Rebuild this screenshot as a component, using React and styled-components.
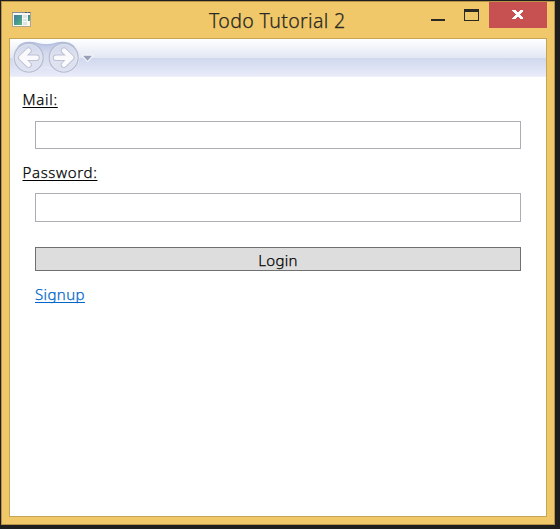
import React from "react";
import styled, { createGlobalStyle } from "styled-components";

const GlobalStyle = createGlobalStyle`
  * { box-sizing: border-box; }
  body { margin: 0; background: #1e1e1e; overflow: hidden; }
`;

const Desktop = styled.div`
  width: 560px;
  height: 529px;
  padding: 1px 5px 4px 1px;
  background: #1e1e1e;
  font-family: "Noto Sans", "Open Sans", sans-serif;
  font-weight: 300;
  -webkit-text-stroke-width: 0.25px;
`;

const Window = styled.div`
  display: flex;
  flex-direction: column;
  height: 524px;
  padding: 0 7px 7px;
  border: 1px solid #b6914a;
  background: #f0c869;
`;

const TitleBar = styled.header`
  display: grid;
  grid-template-columns: 200px 1fr auto;
  height: 36px;
  flex: none;
`;

const AppIcon = styled.svg`
  display: block;
  margin: 9px 0 0 2px;
`;

const Title = styled.h1`
  margin: 0;
  font-size: 19.5px;
  line-height: 37px;
  font-weight: 300;
  letter-spacing: ${(p) => p.$tracking}px;
  white-space: nowrap;
  color: #2b2923;
`;

const Controls = styled.div`
  display: flex;
  align-items: flex-start;
`;

const ControlButton = styled.button`
  width: ${(p) => p.$width}px;
  height: 26px;
  padding: 0;
  border: 0;
  background: ${(p) => (p.$danger ? "#c75050" : "transparent")};
  svg { display: block; }
`;

const Client = styled.main`
  flex: 1;
  border: 1px solid #c5a556;
  background: #fff;
`;

const NavBar = styled.nav`
  height: 38px;
  background: linear-gradient(#fff 0, #e2e7f3 19px, #cfd8ec 19px, #e9ebf9 37px, #f4f5fc 38px);
  svg { display: block; }
`;

const Form = styled.form`
  display: flex;
  flex-direction: column;
  align-items: flex-start;
  padding: 11px 25px 0 12.5px;
`;

const Label = styled.label`
  height: 22px;
  font-size: 15px;
  line-height: 22px;
  letter-spacing: ${(p) => p.$tracking}px;
  text-decoration: underline;
  text-decoration-thickness: 1px;
  text-underline-offset: 2px;
  text-decoration-skip-ink: none;
  color: #000;
`;

const Field = styled.input`
  width: 486px;
  height: ${(p) => p.$height}px;
  margin: ${(p) => p.$margin};
  padding: 0 5px;
  border: 1px solid #abadb3;
  outline: none;
  font: 15px "Noto Sans", sans-serif;
`;

const LoginButton = styled.button`
  width: 486px;
  height: 24px;
  margin: 25px 0 0 12.5px;
  padding: 1px 0 0;
  border: 1px solid #707070;
  background: #ddd;
  font: 300 15px/20px "Noto Sans", sans-serif;
  letter-spacing: 0.3px;
  color: #000;
`;

const SignupLink = styled.a`
  margin: 12px 0 0 12.5px;
  font-size: 15px;
  line-height: 22px;
  text-decoration: underline;
  text-decoration-thickness: 1px;
  text-underline-offset: 2px;
  text-decoration-skip-ink: none;
  letter-spacing: 0.4px;
  color: #0066cc;
`;

function NavigationIcons() {
  return (
    <svg width="90" height="38" viewBox="10 39 90 38">
      <defs>
        <linearGradient id="shell" x1="0" y1="0" x2="0" y2="1">
          <stop offset="0" stopColor="#b7c3e1" />
          <stop offset="0.4" stopColor="#d5dced" />
          <stop offset="1" stopColor="#e2e5f4" />
        </linearGradient>
        <linearGradient id="disc" x1="0" y1="0" x2="0" y2="1">
          <stop offset="0" stopColor="#d0d8ed" />
          <stop offset="0.5" stopColor="#e0e2ef" />
          <stop offset="1" stopColor="#dce1f2" />
        </linearGradient>
      </defs>
      <path d="M28.7 42C37 42 38 44.5 46.2 44.5S55 42 63.7 42A15.5 15.5 0 0 1 63.7 73C55 73 54 67.5 46.2 67.5S37 73 28.7 73A15.5 15.5 0 0 1 28.7 42Z" fill="url(#shell)" stroke="#eef0fa" strokeWidth="0.7" />
      <path d="M18 46.5Q22 42.3 28.7 42.3C37 42.3 38 44.7 46.2 44.7S55 42.3 63.7 42.3Q70 42.3 74.5 46.5" fill="none" stroke="#aab9df" />
      {[28.7, 63.7].map((x) => (
        <g key={x}>
          <circle cx={x} cy="57.7" r="14.4" fill="url(#disc)" stroke="#b8bccf" strokeWidth="1.3" />
          <circle cx={x} cy="57.7" r="13.4" fill="none" stroke="#e3e6f3" strokeWidth="0.7" />
        </g>
      ))}
      <g fill="none" strokeLinecap="round" strokeLinejoin="round">
        <g stroke="#bcc0d2" strokeWidth="6.4">
          <path d="M36.5 57.7H22M28.5 50.7L21.2 57.7L28.5 64.7" />
          <path d="M56 57.7H70.5M64 50.7L71.3 57.7L64 64.7" />
        </g>
        <g stroke="#fafafd" strokeWidth="4.6">
          <path d="M36.5 57.7H22M28.5 50.7L21.2 57.7L28.5 64.7" />
          <path d="M56 57.7H70.5M64 50.7L71.3 57.7L64 64.7" />
        </g>
      </g>
      <path d="M83 55.7H92L87.5 60.7Z" fill="#9a9fb9" stroke="#f5f6fc" strokeWidth="2.4" paintOrder="stroke" strokeLinejoin="round" />
    </svg>
  );
}

export default function App() {
  return (
    <Desktop>
      <GlobalStyle />
      <Window>
        <TitleBar>
          <AppIcon width="20" height="17" viewBox="0 0 20 17">
            <defs>
              <linearGradient id="screen" x1="0" y1="0" x2="1" y2="1">
                <stop offset="0" stopColor="#4977a0" />
                <stop offset="0.55" stopColor="#459a91" />
                <stop offset="1" stopColor="#5fb57b" />
              </linearGradient>
            </defs>
            <path d="M1 1H20V16H1Z" fill="#b1a58c" />
            <path d="M2 2H19V15H2Z" fill="#f8f8f5" />
            <path d="M1 1H20V2H1Z" fill="#888f99" />
            <path d="M14 1H16V2H14ZM17 1H19V2H17Z" fill="#4c5568" />
            <path d="M3 4H11V14H3Z" fill="url(#screen)" />
            <path d="M12 4H16V7H12ZM12 8H16V10H12ZM12 11H16V14H12Z" fill="#e0e3df" />
            <path d="M17 4H19V10H17Z" fill="url(#screen)" />
          </AppIcon>
          <Title $tracking={0.35}>Todo Tutorial 2</Title>
          <Controls>
            <ControlButton $width={33} aria-label="Minimize">
              <svg width="33" height="26"><path d="M8 17H22V19H8Z" fill="#2b2923" /></svg>
            </ControlButton>
            <ControlButton $width={33} aria-label="Maximize">
              <svg width="33" height="26"><path fillRule="evenodd" d="M8 7H23V19H8ZM9 10V18H22V10Z" fill="#2b2923" /></svg>
            </ControlButton>
            <ControlButton $width={58} $danger aria-label="Close">
              <svg width="58" height="26" shapeRendering="crispEdges">
                <path d="M23 8H26L28.5 10.5L31 8H34V9L30.5 12.5L34 16V17H31L28.5 14.5L26 17H23V16L26.5 12.5L23 9Z" fill="#fff" />
              </svg>
            </ControlButton>
          </Controls>
        </TitleBar>
        <Client>
          <NavBar><NavigationIcons /></NavBar>
          <Form onSubmit={(e) => e.preventDefault()}>
            <Label htmlFor="mail" $tracking={0.7}>Mail:</Label>
            <Field id="mail" $height={28} $margin="11px 0 12px 12.5px" />
            <Label htmlFor="password" $tracking={0.65}>Password:</Label>
            <Field id="password" type="password" $height={29} $margin="10px 0 0 12.5px" />
            <LoginButton>Login</LoginButton>
            <SignupLink href="#">Signup</SignupLink>
          </Form>
        </Client>
      </Window>
    </Desktop>
  );
}
